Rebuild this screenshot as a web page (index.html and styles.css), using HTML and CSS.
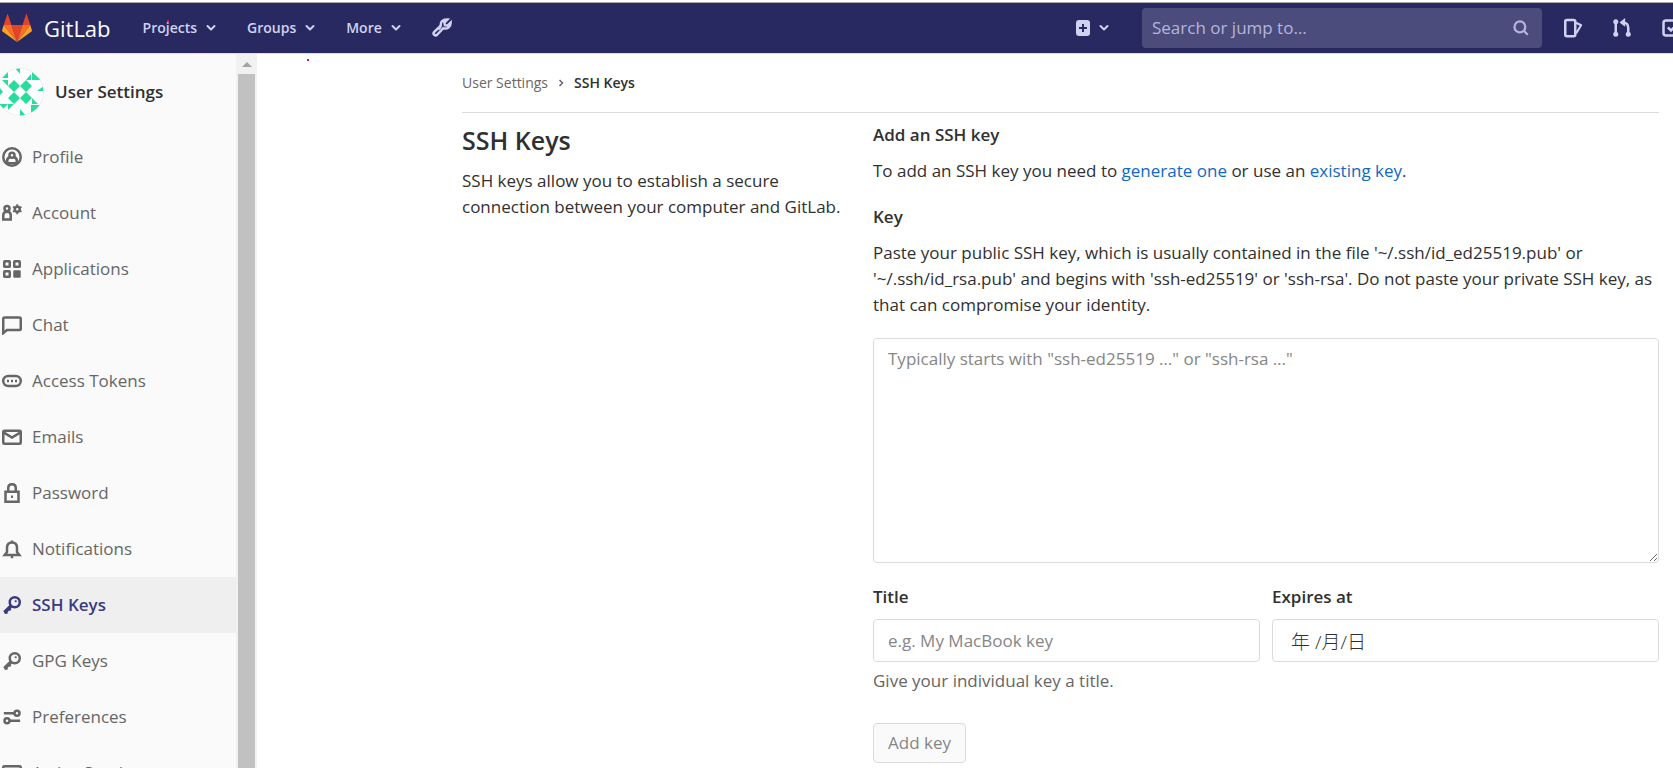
FILE: index.html
```html
<!DOCTYPE html>
<html lang="en">
<head>
<meta charset="utf-8">
<title>SSH Keys · User Settings · GitLab</title>
<link rel="stylesheet" href="styles.css">
</head>
<body>
<header class="navbar">
  <a class="brand" href="#">
    <svg class="brand-logo" viewBox="0 0 30 28" aria-hidden="true">
      <path fill="#e24329" d="M15 28 9.500 11h11z"/>
      <path fill="#fc6d26" d="M15 28 9.500 11H1.700zM15 28l5.500-17h7.800z"/>
      <path fill="#fca326" d="M1.700 11 .1 16.300a1.200 1.200 0 0 0 .4 1.200L15 28zM28.300 11l1.600 5.300a1.200 1.200 0 0 1-.4 1.200L15 28z"/>
      <path fill="#e24329" d="M1.700 11h7.800L6 .5q-.4-.9-.8 0zM28.300 11h-7.800L24 .5q.4-.9.8 0z"/>
    </svg>
    <span>GitLab</span>
  </a>
  <nav class="menu">
    <button class="menu-item" type="button">Projects <svg class="caret" viewBox="0 0 10 8"><path d="m1.500 2 3.500 3.500L8.500 2"/></svg></button>
    <button class="menu-item" type="button">Groups <svg class="caret" viewBox="0 0 10 8"><path d="m1.500 2 3.500 3.500L8.500 2"/></svg></button>
    <button class="menu-item" type="button">More <svg class="caret" viewBox="0 0 10 8"><path d="m1.500 2 3.500 3.500L8.500 2"/></svg></button>
    <a class="icon-link" href="#" aria-label="Admin Area"><svg class="icon" viewBox="0 0 16 16"><path d="m9 8.200-4.900 5.200a1.600 1.600 0 0 1-2.300-2.300L7 6.200C6.600 3.500 8.500.9 12.300 1.200L9.900 3.600l.4 2.100 2.100.4 2.500-2.400C15 7 12.300 9.100 9 8.200zM5 9l2-2"/></svg></a>
  </nav>
  <div class="tools">
    <button class="menu-item new-item" type="button" aria-label="New">
      <svg class="plus" viewBox="0 0 14 16"><rect width="14" height="16" rx="3" fill="#d1d1f0"/><path d="M7 4v8M3 8h8" stroke="#292961" stroke-width="2"/></svg>
      <svg class="caret" viewBox="0 0 10 8"><path d="m1.500 2 3.500 3.500L8.500 2"/></svg>
    </button>
    <form class="search">
      <input class="search-input" type="text" aria-label="Search" placeholder="Search or jump to…">
      <svg class="search-icon" viewBox="0 0 16 16"><circle cx="7" cy="7" r="4.800"/><path d="m10.500 10.500 3.500 3.500"/></svg>
    </form>
    <a class="icon-link" href="#" aria-label="Issues"><svg class="icon" viewBox="0 0 16 16"><rect x="1.800" y="1.500" width="8" height="13" rx="1.200"/><path stroke-width="1.600" stroke-linejoin="round" d="m10.500 3.800 4 2-4 6.500"/></svg></a>
    <a class="icon-link" href="#" aria-label="Merge requests"><svg class="icon" viewBox="0 0 16 16"><g fill="#d1d1f0" stroke="none"><circle cx="3" cy="3" r="2"/><circle cx="3" cy="13" r="2"/><circle cx="13" cy="13" r="2"/><path d="m6 3.500 4.500-3.500v7z"/></g><path d="M3 3v10M13 13V8q0-4-4-4.500"/></svg></a>
    <a class="icon-link" href="#" aria-label="To-Do List"><svg class="icon" viewBox="0 0 16 16"><rect x="2" y="2" width="12" height="12" rx="2"/><path d="m5.500 7.500 2.500 2.500 5-5"/></svg></a>
  </div>
  <span class="mark mark-menu"></span>
  <span class="mark mark-page"></span>
</header>

<div class="layout">
  <aside class="sidebar">
    <div class="sidebar-scroll">
      <a class="sidebar-title" href="#">
        <svg class="avatar" viewBox="0 0 48 48" aria-hidden="true">
          <defs><clipPath id="round"><circle cx="24" cy="24" r="23.500"/></clipPath></defs>
          <circle cx="24" cy="24" r="23.500" fill="#fff" stroke="#eee" stroke-width="1"/>
          <g clip-path="url(#round)" fill="#27dd9c">
            <path d="m18 12 6 6-6 6-6-6zM30 12l6 6-6 6-6-6zM18 24l6 6-6 6-6-6zM30 24l6 6-6 6-6-6z"/>
            <path d="M19 0h5v6zM6 10l6-6v6zM6 12h6v6zM30 12l5-6v6zM36 4v8h9zM41 23l7-5v5zM4 20l3 4-3 3z"/>
            <path d="M3 36h9l-6 6zM12 36h6l-6 6zM24 41l6 7h-6zM36 30l6 6h-6zM35 37h10L35 47z"/>
          </g>
        </svg>
        <span>User Settings</span>
      </a>
      <nav class="side-nav">
        <a class="side-link" href="#"><svg class="icon" viewBox="0 0 16 16"><circle cx="8" cy="8" r="7"/><circle cx="8" cy="6.500" r="2"/><path d="M4 13v-1.500q0-2.700 2.500-3.500M12 13v-1.500q0-2.700-2.500-3.500M4.500 12.500q3.500 1 7 0"/></svg><span>Profile</span></a>
        <a class="side-link" href="#"><svg class="icon" viewBox="0 0 16 16"><circle cx="4" cy="4.300" r="2"/><path d="M1 13.200V9.800q0-2.800 3-2.800t3 2.800v3.400z"/><circle cx="12.200" cy="5" r="2"/><path stroke-width="1.500" d="M12.200 1v2M12.200 7v2M8.800 3l1.700 1M13.900 6l1.700 1M8.800 7l1.700-1M13.900 4l1.700-1"/></svg><span>Account</span></a>
        <a class="side-link" href="#"><svg class="icon" viewBox="0 0 16 16"><rect x="1.800" y="1.800" width="4.400" height="4.400" rx=".5"/><rect x="9.800" y="1.800" width="4.400" height="4.400" rx=".5"/><rect x="1.800" y="9.800" width="4.400" height="4.400" rx=".5"/><rect x="9" y="9" width="6" height="6" rx="1" fill="currentColor"/></svg><span>Applications</span></a>
        <a class="side-link" href="#"><svg class="icon" viewBox="0 0 16 16"><path d="M1 14.500V3q0-1 1-1h12q1 0 1 1v8q0 1-1 1H4z"/></svg><span>Chat</span></a>
        <a class="side-link" href="#"><svg class="icon" viewBox="0 0 16 16"><rect x="1" y="4" width="14" height="8" rx="4"/><path d="M4 8h1.600M7.200 8h1.600M10.400 8H12"/></svg><span>Access Tokens</span></a>
        <a class="side-link" href="#"><svg class="icon" viewBox="0 0 16 16"><rect x="1" y="3" width="14" height="10.400" rx="1"/><path d="m1.500 4.500 6.500 4 6.500-4"/></svg><span>Emails</span></a>
        <a class="side-link" href="#"><svg class="icon" viewBox="0 0 16 16"><path d="M2.800 7h10.400v8H2.800zM5 7V4q0-3 3-3t3 3v3M7.200 11h1.600"/></svg><span>Password</span></a>
        <a class="side-link" href="#"><svg class="icon" viewBox="0 0 16 16"><path d="M2.200 12.800h11.600L12 10.500V7q0-4.200-4-4.200T4 7v3.500zM8 1.200V3M7 14.300h2"/></svg><span>Notifications</span></a>
        <a class="side-link active" href="#" aria-current="page"><svg class="icon" viewBox="0 0 16 16"><circle cx="10.200" cy="5.800" r="4"/><path stroke-width="3" d="m7 9-5 5"/><path d="M2 14h2.500M5 11l2 1"/><path stroke-width="1.500" d="M10.200 5h1.500"/></svg><span>SSH Keys</span></a>
        <a class="side-link" href="#"><svg class="icon" viewBox="0 0 16 16"><circle cx="10.200" cy="5.800" r="4"/><path stroke-width="3" d="m7 9-5 5"/><path d="M2 14h2.500M5 11l2 1"/><path stroke-width="1.500" d="M10.200 5h1.500"/></svg><span>GPG Keys</span></a>
        <a class="side-link" href="#"><svg class="icon" viewBox="0 0 16 16"><circle cx="12" cy="5" r="2"/><circle cx="4" cy="11" r="2"/><path d="M1.500 5H10M6 11h8.500"/></svg><span>Preferences</span></a>
        <a class="side-link" href="#"><svg class="icon" viewBox="0 0 16 16"><rect x="1" y="2.500" width="14" height="10" rx="1"/><path d="M5 15h6"/></svg><span>Active Sessions</span></a>
      </nav>
    </div>
    <div class="scrollbar" aria-hidden="true"><div class="scroll-arrow"></div><div class="scroll-thumb"></div></div>
  </aside>

  <main class="content">
    <nav class="breadcrumb" aria-label="Breadcrumb">
      <a class="crumb" href="#">User Settings</a>
      <svg class="crumb-arrow" viewBox="0 0 8 8"><path d="m2.500 1 3 3-3 3"/></svg>
      <a class="crumb current" href="#">SSH Keys</a>
    </nav>
    <div class="columns">
      <section class="intro">
        <h1 class="page-title">SSH Keys</h1>
        <p class="text">SSH keys allow you to establish a secure connection between your computer and GitLab.</p>
      </section>
      <form class="key-form">
        <h2 class="label">Add an SSH key</h2>
        <p class="text lead">To add an SSH key you need to <a class="link" href="#">generate one</a> or use an <a class="link" href="#">existing key</a>.</p>
        <label class="label" for="key">Key</label>
        <p class="text hint">Paste your public SSH key, which is usually contained in the file '~/.ssh/id_ed25519.pub' or '~/.ssh/id_rsa.pub' and begins with 'ssh-ed25519' or 'ssh-rsa'. Do not paste your private SSH key, as that can compromise your identity.</p>
        <textarea class="field key-area" id="key" placeholder="Typically starts with &quot;ssh-ed25519 …&quot; or &quot;ssh-rsa …&quot;"></textarea>
        <div class="pair">
          <div class="group">
            <label class="label" for="title">Title</label>
            <input class="field" id="title" type="text" placeholder="e.g. My MacBook key">
            <p class="text help">Give your individual key a title.</p>
          </div>
          <div class="group">
            <label class="label" for="expires">Expires at</label>
            <input class="field date" id="expires" type="text" value="年 /月/日">
          </div>
        </div>
        <button class="submit" type="button" disabled>Add key</button>
      </form>
    </div>
  </main>
</div>
</body>
</html>
```
FILE: styles.css
```css
* { box-sizing: border-box; }

body {
  margin: 0;
  height: 100vh;
  display: flex;
  flex-direction: column;
  overflow: hidden;
  background: #fff;
  color: #303030;
  font: 17px/26px "Open Sans", "Noto Sans", "Noto Sans CJK SC", sans-serif;
}

h1, h2, p { margin: 0; }
a { color: inherit; text-decoration: none; }
button, input, textarea { font: inherit; color: inherit; }
svg { display: block; flex: none; fill: none; stroke: currentColor; stroke-width: 2; }
svg [fill]:not([stroke]) { stroke: none; }

.navbar {
  position: relative;
  flex: none;
  height: 52px;
  margin-top: 2px;
  padding-left: 2px;
  display: flex;
  align-items: center;
  background: #292961;
  border-top: 1px solid #a9a9a9;
  border-bottom: 1px solid #dcdcec;
  color: #d1d1f0;
}
.brand { display: flex; align-items: center; gap: 12px; color: #fff; font-size: 22px; }
.brand-logo { width: 30px; height: 28px; stroke: none; }
.menu { display: flex; align-items: center; gap: 31px; margin-left: 32px; }
.menu-item {
  display: flex;
  align-items: center;
  gap: 9px;
  padding: 0;
  border: 0;
  background: none;
  font-size: 14px;
  font-weight: 600;
}
.caret { width: 10px; height: 8px; stroke-linecap: round; stroke-linejoin: round; }
.icon { width: 20px; height: 20px; }
.tools {
  display: flex;
  align-items: center;
  gap: 29px;
  margin-left: auto;
  margin-right: -8px;
}
.plus { width: 14px; height: 16px; }
.new-item { margin-right: 4px; }
.search {
  width: 400px;
  height: 40px;
  margin-right: -8px;
  display: flex;
  align-items: center;
  padding: 0 12px 0 10px;
  border-radius: 4px;
  background: #4c4c7c;
}
.search-input { flex: 1; min-width: 0; padding: 0; border: 0; outline: 0; background: none; }
.search-input::placeholder { color: #b5b5dc; opacity: 1; }
.search-icon { width: 18px; height: 18px; color: #b5b5dc; }

.mark { position: absolute; width: 2px; height: 2px; background: #e8112d; }
.mark-menu { left: 167px; top: 17px; }
.mark-page { left: 307px; top: 56px; }

.layout { flex: 1; min-height: 0; display: flex; }
.sidebar { flex: none; width: 257px; display: flex; background: #fafafa; }
.sidebar-scroll { flex: 1; overflow: hidden; }
.sidebar-title {
  height: 75px;
  display: flex;
  align-items: center;
  gap: 11px;
  margin-left: -4px;
  font-weight: 600;
}
.avatar { width: 48px; height: 48px; stroke: none; }
.side-link {
  height: 56px;
  display: flex;
  align-items: center;
  gap: 10px;
  padding-left: 2px;
  color: #666;
}
.side-link.active { background: #efefef; color: #393982; font-weight: 600; }
.scrollbar { width: 21px; padding: 0 2px; display: flex; flex-direction: column; align-items: center; background: #f1f1f1; }
.scroll-arrow {
  margin: 8px 0 7px;
  border: 5px solid transparent;
  border-top: 0;
  border-bottom-color: #a3a3a3;
}
.scroll-thumb { flex: 1; align-self: stretch; background: #c1c1c1; }

.content { flex: 1; min-width: 0; padding: 0 14px 0 205px; }
.breadcrumb {
  height: 59px;
  display: flex;
  align-items: center;
  gap: 9px;
  border-bottom: 1px solid #dbdbdb;
  font-size: 14px;
}
.crumb { color: #666; }
.crumb.current { color: #303030; font-weight: 600; }
.crumb-arrow { width: 8px; height: 8px; color: #666; overflow: visible; }
.crumb-arrow path { stroke-width: 1.500; }
.columns { display: grid; grid-template-columns: 387fr 786fr; gap: 24px; }
.intro { padding-top: 11px; }
.page-title { margin-bottom: 12px; font-size: 25px; line-height: 32px; font-weight: 600; }
.key-form { display: flex; flex-direction: column; padding-top: 9px; }
.label { font-size: 17px; line-height: 26px; font-weight: 600; }
.lead { margin: 10px 0 20px; }
.hint { margin: 10px 0 20px; }
.link { color: #1068bf; }
.field {
  width: 100%;
  height: 43px;
  padding: 0 14px;
  border: 1px solid #dbdbdb;
  border-radius: 4px;
  background: #fff;
}
.field::placeholder { color: #868686; opacity: 1; }
.key-area { height: 225px; padding: 7px 14px; resize: both; }
.date { padding-left: 18px; font-size: 19px; font-weight: 300; }
.pair { display: grid; grid-template-columns: 1fr 1fr; gap: 12px; margin-top: 21px; }
.group .field { margin-top: 9px; }
.help { margin-top: 6px; color: #666; }
.submit {
  align-self: flex-start;
  height: 40px;
  margin-top: 29px;
  padding: 0 14px;
  border: 1px solid #dbdbdb;
  border-radius: 4px;
  background: #fafafa;
  color: #868686;
}
```
